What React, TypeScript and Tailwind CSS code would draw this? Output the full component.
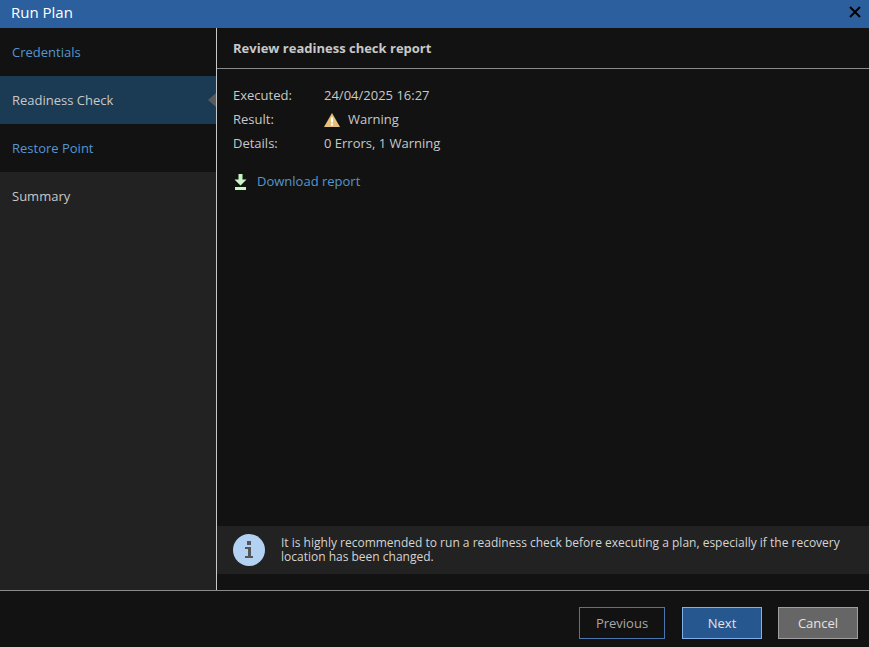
import React from 'react';

const steps = [
    { label: 'Credentials', className: 'bg-[#121212] text-[#5596d0]' },
    { label: 'Readiness Check', className: 'bg-[#1b3a53] text-[#c8c8c8]', active: true },
    { label: 'Restore Point', className: 'bg-[#121212] text-[#5596d0]' },
    { label: 'Summary', className: 'bg-[#222222] text-[#c8c8c8]' },
];

const DetailRow = ({ label, children }: { label: string; children: React.ReactNode }) => (
    <div className="flex items-center h-6">
        <div className="w-[91px]">{label}</div>
        <div className="flex items-center">{children}</div>
    </div>
);

export default function App() {
    return (
        <div className="w-[869px] h-[647px] flex flex-col overflow-hidden bg-[#121212] text-[13px] text-[#c8c8c8] font-['Open_Sans',sans-serif]">
            {/* Title bar */}
            <div className="h-[28px] shrink-0 flex items-center justify-between pl-[11px] pr-[8px] pb-[4px] bg-[#2b5f9e] text-white text-[15px]">
                <span>Run Plan</span>
                <svg width="12" height="12" viewBox="0 0 12 12" className="text-black">
                    <path d="M1 1 L11 11 M11 1 L1 11" stroke="currentColor" strokeWidth="2" />
                </svg>
            </div>

            <div className="flex-1 flex min-h-0 border-b border-[#8a8a8a]">
                {/* Wizard steps */}
                <div className="w-[216px] shrink-0 flex flex-col bg-[#222222]">
                    {steps.map((step) => (
                        <div key={step.label} className={`relative h-12 flex items-center pl-3 pt-[2px] ${step.className}`}>
                            {step.label}
                            {step.active && (
                                <div className="absolute right-0 top-[17px] w-0 h-0 border-y-[7px] border-y-transparent border-r-[8px] border-r-[#5a5a5a]" />
                            )}
                        </div>
                    ))}
                </div>

                {/* Content */}
                <div className="flex-1 flex flex-col border-l border-[#c8c8c8] min-w-0">
                    <div className="h-[41px] shrink-0 flex items-center pl-4 pt-[2px] border-b border-[#8a8a8a] font-bold text-[#c8c8c8]">
                        Review readiness check report
                    </div>
                    <div className="flex-1 pl-4 pt-[15px]">
                        <DetailRow label="Executed:">24/04/2025 16:27</DetailRow>
                        <DetailRow label="Result:">
                            <svg width="16" height="14" viewBox="0 0 16 14" className="mr-2">
                                <path d="M8 0 L16 14 L0 14 Z" fill="#e6c07c" />
                                <rect x="7" y="4.5" width="2" height="5" fill="#fff" />
                                <rect x="7" y="10.5" width="2" height="2" fill="#fff" />
                            </svg>
                            Warning
                        </DetailRow>
                        <DetailRow label="Details:">0 Errors, 1 Warning</DetailRow>
                        <div className="flex items-center mt-[14px] h-6 text-[#5596d0]">
                            <svg width="13" height="16" viewBox="0 0 13 16" className="mr-[10px] ml-px">
                                <path d="M4.5 0 H8.5 V5.5 H12.5 L6.5 11.5 L0.5 5.5 H4.5 Z" fill="#c9f5c4" />
                                <rect x="1" y="13" width="11" height="3" fill="#c9f5c4" />
                            </svg>
                            Download report
                        </div>
                    </div>
                    {/* Info note */}
                    <div className="h-12 shrink-0 mb-4 flex items-center bg-[#222222] pl-4 pr-6">
                        <svg width="32" height="32" viewBox="0 0 32 32" className="shrink-0 mr-4">
                            <circle cx="16" cy="16" r="16" fill="#b3d1f2" />
                            <rect x="14" y="7" width="4" height="4" fill="#555" />
                            <path d="M12 13 H18 V22 H20 V24 H12 V22 H15 V15 H12 Z" fill="#555" />
                        </svg>
                        <p className="text-[12px] leading-[14px] text-[#d4d4d4]">
                            It is highly recommended to run a readiness check before executing a plan, especially if the recovery location has been changed.
                        </p>
                    </div>
                </div>
            </div>

            {/* Footer */}
            <div className="h-[56px] shrink-0 flex items-start justify-end gap-4 pt-4 pr-[11px] font-medium">
                <button className="w-[86px] h-8 mr-px pt-px border border-[#4a76ad] text-[#a8a8a8]">Previous</button>
                <button className="w-[80px] h-8 pt-px border border-[#7fb0ea] bg-[#26578f] text-[#e4e4e4]">Next</button>
                <button className="w-[80px] h-8 pt-px border border-[#a0a0a0] bg-[#666666] text-[#e4e4e4]">Cancel</button>
            </div>
        </div>
    );
}
